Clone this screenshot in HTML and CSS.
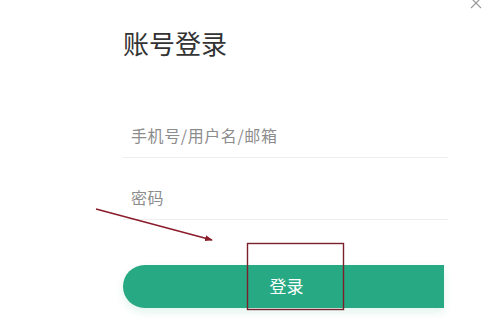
FILE: index.html
```html
<!DOCTYPE html>
<html lang="zh-CN">
<head>
<meta charset="utf-8">
<title>账号登录</title>
<link rel="stylesheet" href="styles.css">
</head>
<body>
<div class="modal">
  <svg class="close" width="12" height="12" viewBox="0 0 12 12" aria-label="关闭">
    <path d="M1 1 L11 11 M11 1 L1 11" stroke="#9a9a9a" stroke-width="1.2" fill="none"/>
  </svg>
  <div class="content">
    <h1 class="title">账号登录</h1>
    <div class="field"><span class="placeholder">手机号/用户名/邮箱</span></div>
    <div class="field"><span class="placeholder">密码</span></div>
    <button class="login-btn">登录</button>
  </div>
  <svg class="annot" width="500" height="318" viewBox="0 0 500 318">
    <defs>
      <marker id="ah" markerWidth="8" markerHeight="6" refX="7" refY="3" orient="auto" markerUnits="userSpaceOnUse">
        <path d="M0 0 L8 3 L0 6 Z" fill="#8a1c2c"/>
      </marker>
    </defs>
    <line x1="96" y1="209" x2="212" y2="240" stroke="#8a1c2c" stroke-width="1.6" marker-end="url(#ah)"/>
    <rect x="247.5" y="243.5" width="96" height="66" fill="none" stroke="#7a1f2b" stroke-width="1.4"/>
  </svg>
</div>
</body>
</html>
```
FILE: styles.css
```css
html, body {
  margin: 0;
  padding: 0;
  background: #ffffff;
}
.modal {
  position: relative;
  width: 500px;
  height: 318px;
  overflow: hidden;
  background: #ffffff;
  font-family: "Noto Sans CJK SC", "Noto Sans", sans-serif;
}
.close {
  position: absolute;
  top: -3px;
  left: 470px;
}
.content {
  padding: 24.5px 0 0 123px;
  width: 325px;
}
.title {
  margin: 0 0 35px 0;
  font-size: 26px;
  line-height: 36px;
  font-weight: 400;
  color: #333333;
}
.field {
  padding: 29px 0 12px 8px;
  line-height: 20px;
  border-bottom: 1px solid #eeeeee;
}
.placeholder {
  font-size: 16px;
  color: #8c8c8c;
  letter-spacing: 0.6px;
}
.login-btn {
  display: block;
  margin-top: 45px;
  width: 321px;
  height: 43px;
  border: none;
  border-radius: 22px 0 0 22px;
  background: #27a983;
  color: #ffffff;
  font-family: "Noto Sans CJK SC", sans-serif;
  font-size: 17px;
  padding: 0 0 2px 6px;
  box-shadow: 0 4px 8px rgba(39, 169, 131, 0.14);
}
.annot {
  position: absolute;
  left: 0;
  top: 0;
  pointer-events: none;
}
```
